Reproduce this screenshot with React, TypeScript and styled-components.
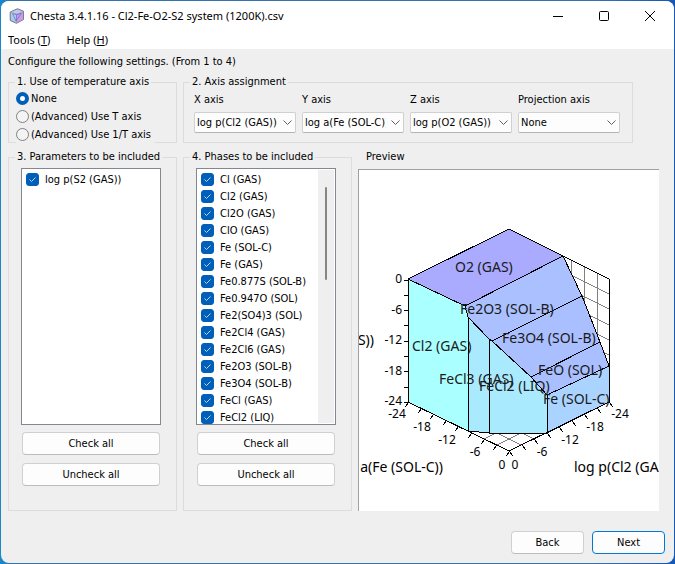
import React, { useState } from "react";
import styled, { createGlobalStyle } from "styled-components";

const GlobalStyle = createGlobalStyle`
  * { box-sizing: border-box; }
  body {
    margin: 0;
    background: linear-gradient(90deg, #1689cc, #3374ae 12px, #3374ae 88%, #1458b8);
    font-family: "DejaVu Sans Condensed", "DejaVu Sans", sans-serif;
    font-size: 11px;
    line-height: 14px;
    color: #000;
  }
`;

const Window = styled.div`
  display: flex;
  flex-direction: column;
  min-height: calc(100vh - 2px);
  margin: 1px;
  border-radius: 8px;
  overflow: hidden;
  background: #efefef;
`;

const TitleBar = styled.header`
  display: flex;
  align-items: center;
  height: 30px;
  padding-left: 8px;
  background: #fff;
  font-family: "Noto Sans", sans-serif;
`;

const Title = styled.h1`
  flex: 1;
  margin: 0 0 0 5px;
  font-size: 11px;
  font-weight: 400;
`;

const Caption = styled.button`
  display: flex;
  align-items: center;
  justify-content: center;
  width: 46px;
  height: 30px;
  padding: 0;
  border: 0;
  background: none;

  &:last-child { margin-right: 1px; }
`;

const MenuBar = styled.nav`
  display: flex;
  gap: 16px;
  height: 18px;
  padding: 0 7px;
  background: #fff;
`;

const MenuItem = styled.button`
  padding: 0;
  border: 0;
  background: none;
  color: #000;
  font: 11px/18px "Noto Sans", sans-serif;
`;

const Main = styled.main`
  flex: 1;
  display: flex;
  flex-direction: column;
  padding: 6px 9px 9px 7px;
`;

const Intro = styled.p`
  margin: 0 0 6px;
`;

const Row = styled.div<{ $grow?: boolean }>`
  display: flex;
  gap: 6px;
  flex: ${(p) => (p.$grow ? 1 : "none")};
  margin-top: ${(p) => (p.$grow ? 7 : 0)}px;
`;

const Group = styled.fieldset<{ $width: number }>`
  flex: 0 1 ${(p) => p.$width}px;
  min-width: 0;
  margin: 0;
  padding: 0 12px;
  border: 1px solid #dcdcdc;
`;

const Legend = styled.legend`
  margin-left: -6px;
  padding: 0 2px;
  white-space: nowrap;
`;

const Radios = styled.div`
  display: flex;
  flex-direction: column;
  gap: 1px;
  width: 138px;
  height: 53px;
  margin: 1px 0 -1px -5px;
  background: #efefef;
`;

const RadioLabel = styled.label`
  display: flex;
  flex: none;
  align-items: center;
  gap: 2px;
  height: 17px;
`;

const Radio = styled.input`
  appearance: none;
  width: 13px;
  height: 13px;
  margin: 0;
  border: 1px solid #808080;
  border-radius: 50%;
  background: #f4f4f4;

  &:checked {
    border: 4px solid #005fb8;
    background: #fff;
  }
`;

const Axes = styled.div`
  display: grid;
  grid-template-columns: repeat(4, minmax(0, 102px));
  gap: 6px;
  margin: 4px 0 8px -2px;
`;

const AxisLabel = styled.label`
  display: flex;
  flex-direction: column;
  gap: 5px;
`;

const SelectBox = styled.span`
  position: relative;
  display: block;
`;

const Select = styled.select`
  appearance: none;
  display: block;
  width: 100%;
  height: 21px;
  padding: 0 17px 0 2px;
  border: 1px solid #d0d0d0;
  border-bottom-color: #b4b4b4;
  border-radius: 2px;
  background: #fdfdfd;
  color: #000;
  font: inherit;
`;

const Chevron = styled.svg`
  position: absolute;
  right: 4px;
  top: 8px;
  pointer-events: none;
`;

const List = styled.div`
  display: flex;
  height: 257px;
  margin-top: 4px;
  border: 1px solid #828790;
  background: #fff;
  overflow: hidden;
`;

const Items = styled.ul`
  flex: 1;
  min-width: 0;
  margin: 0;
  padding: 2px 0 0 4px;
  list-style: none;
`;

const ItemLabel = styled.label`
  display: flex;
  align-items: center;
  gap: 6px;
  height: 17px;
  white-space: nowrap;
`;

const CheckWrap = styled.span`
  position: relative;
  width: 13px;
  height: 13px;
`;

const Check = styled.input`
  appearance: none;
  display: block;
  width: 13px;
  height: 13px;
  margin: 0;
  border: 1px solid #808080;
  border-radius: 3px;
  background: #fff;

  &:checked {
    border-color: #005fb8;
    background: #005fb8;
  }
`;

const Tick = styled.svg`
  position: absolute;
  inset: 0;
  pointer-events: none;
`;

const Track = styled.div`
  display: flex;
  justify-content: center;
  width: 16px;
  margin: 1px;
  padding-top: 17px;
  background: #efefef;
`;

const Thumb = styled.div`
  width: 2px;
  height: 93px;
  border-radius: 1px;
  background: #868686;
`;

const Actions = styled.div`
  display: flex;
  flex-direction: column;
  gap: 8px;
  padding: 7px 1px 0;
`;

const Button = styled.button<{ $primary?: boolean }>`
  height: 23px;
  padding: 0 8px;
  border: 1px solid ${(p) => (p.$primary ? "#0078d4" : "#d0d0d0")};
  border-bottom-color: ${(p) => (p.$primary ? "#0078d4" : "#bcbcbc")};
  border-radius: 4px;
  background: #fdfdfd;
  color: #000;
  font: inherit;
`;

const ListGroup = styled(Group)`
  height: 361px;
  padding-right: 15px;
`;

const Preview = styled.section`
  flex: 1;
  min-width: 0;
  display: flex;
  flex-direction: column;
  margin-right: 6px;
`;

const PreviewTitle = styled.h2`
  margin: 0 0 5px 8px;
  font-size: 11px;
  font-weight: 400;
`;

const Canvas = styled.div`
  height: 342px;
  border-top: 1px solid #a0a0a0;
  border-left: 1px solid #a0a0a0;
  background: #fff;
`;

const Chart = styled.svg`
  display: block;
  width: 100%;
  height: 100%;
  font-family: "Noto Sans", sans-serif;
`;

const Footer = styled.footer`
  display: flex;
  justify-content: flex-end;
  gap: 8px;
  margin-top: 20px;

  ${Button} { width: 73px; }
`;

const axes = [
  { label: "X axis", value: "log p(Cl2 (GAS))" },
  { label: "Y axis", value: "log a(Fe (SOL-C))" },
  { label: "Z axis", value: "log p(O2 (GAS))" },
  { label: "Projection axis", value: "None" },
];

const phases = [
  "Cl (GAS)", "Cl2 (GAS)", "Cl2O (GAS)", "ClO (GAS)", "Fe (SOL-C)",
  "Fe (GAS)", "Fe0.877S (SOL-B)", "Fe0.947O (SOL)", "Fe2(SO4)3 (SOL)",
  "Fe2Cl4 (GAS)", "Fe2Cl6 (GAS)", "Fe2O3 (SOL-B)", "Fe3O4 (SOL-B)",
  "FeCl (GAS)", "FeCl2 (LIQ)",
];

const regions = [
  { fill: "#aaaaff", points: "509,229 563,256 465,306 408,279" },
  { fill: "#aaffff", points: "408,279 465,306 468,317 468,431 408,402" },
  { fill: "#aaeaff", points: "468,317 489,339 489,433 468,431" },
  { fill: "#aaeaff", points: "489,339 492,341 531,377 547,395 547,433 489,433" },
  { fill: "#aac0ff", points: "465,306 563,256 582,296 492,341 489,339 468,317" },
  { fill: "#aabfff", points: "492,341 582,296 600,342 531,377" },
  { fill: "#aabfff", points: "531,377 600,342 609,366 547,395" },
  { fill: "#aad4ff", points: "547,395 609,366 609,402 547,433" },
];

const regionLabels: [string, number, number][] = [
  ["O2 (GAS)", 455, 272],
  ["Fe2O3 (SOL-B)", 460, 314],
  ["Fe3O4 (SOL-B)", 502, 343],
  ["Cl2 (GAS)", 412, 351],
  ["FeCl3 (GAS)", 439, 384],
  ["FeCl2 (LIQ)", 479, 391],
  ["FeO (SOL)", 538, 375],
  ["Fe (SOL-C)", 543, 404],
];

const bottomLabels: [string, number, number][] = [
  ["-24", 397, 418], ["-18", 422, 431], ["-12", 447, 444], ["-6", 475, 456], ["0", 502, 469],
  ["0", 515, 469], ["-6", 542, 456], ["-12", 570, 444], ["-18", 595, 431], ["-24", 620, 418],
];

const steps = [0, 1, 2, 3, 4, 5, 6, 7, 8];

function PhaseDiagram() {
  return (
    <Chart viewBox="359 170 300 341" role="img" aria-label="Phase diagram preview">
      <g stroke="#808080" fill="none" shapeRendering="crispEdges">
        <path d="M571.5 260V330M584.5 266V330M597.5 273V350" />
        <path d="M559 269L609 294M559 284L609 309M559 300L609 325M559 315L609 340M575 338L609 355" />
        <path d="M484 439L500 431M497 445L525 431M534 439L518 431M521 445L493 431" />
      </g>
      <g stroke="#000" strokeLinejoin="round" shapeRendering="crispEdges">
        {regions.map((r) => (
          <polygon key={r.points} points={r.points} fill={r.fill} />
        ))}
        <path fill="none" d="M563 256L609 279V402L509 451L408 402V279" />
        {steps.map((i) => {
          const y = Math.round(279.5 + i * 15.3);
          const lx = Math.round(408 + i * 12.6);
          const rx = Math.round(509 + i * 12.5);
          const ly = Math.round(402 + i * 6.1);
          const ry = Math.round(451 - i * 6.1);
          return (
            <path
              key={i}
              fill="none"
              d={`M404 ${y}H409M${lx + 1} ${ly}l-4 5M${rx} ${ry}l4 5`}
            />
          );
        })}
      </g>
      <g fontSize="12">
        {[0, 1, 2, 3, 4].map((i) => (
          <text key={i} x="402" y={Math.round(283 + i * 30.5)} textAnchor="end">
            {i === 0 ? "0" : `-${i * 6}`}
          </text>
        ))}
        {bottomLabels.map(([t, x, y]) => (
          <text key={x} x={x} y={y} textAnchor="middle">{t}</text>
        ))}
      </g>
      <g fontSize="14">
        {regionLabels.map(([t, x, y]) => (
          <text key={t} x={x} y={y} fill="#1a1a1a">{t}</text>
        ))}
        <text x="374" y="345" textAnchor="end">log p(O2 (GAS))</text>
        <text x="443" y="472" textAnchor="end">log a(Fe (SOL-C))</text>
        <text x="574" y="472">log p(Cl2 (GAS))</text>
      </g>
    </Chart>
  );
}

function CheckItem({ text, checked, onToggle }: { text: string; checked: boolean; onToggle: () => void }) {
  return (
    <li>
      <ItemLabel>
        <CheckWrap>
          <Check type="checkbox" checked={checked} onChange={onToggle} />
          {checked && (
            <Tick width="13" height="13" viewBox="0 0 13 13" fill="none" stroke="#b8d8f5">
              <path d="M3.5 6.5L5.5 8.5L9.5 4.5" />
            </Tick>
          )}
        </CheckWrap>
        {text}
      </ItemLabel>
    </li>
  );
}

function CheckGroup({ title, items, scroll }: { title: string; items: string[]; scroll?: boolean }) {
  const [off, setOff] = useState<string[]>([]);
  const toggle = (t: string) => setOff(off.includes(t) ? off.filter((o) => o !== t) : [...off, t]);
  return (
    <ListGroup $width={169}>
      <Legend>{title}</Legend>
      <List>
        <Items>
          {items.map((t) => (
            <CheckItem key={t} text={t} checked={!off.includes(t)} onToggle={() => toggle(t)} />
          ))}
        </Items>
        {scroll && <Track><Thumb /></Track>}
      </List>
      <Actions>
        <Button type="button" onClick={() => setOff([])}>Check all</Button>
        <Button type="button" onClick={() => setOff(items)}>Uncheck all</Button>
      </Actions>
    </ListGroup>
  );
}

function Logo() {
  return (
    <svg width="16" height="16" viewBox="0 0 16 16" strokeLinejoin="round">
      <path d="M8.5 .7L14.5 3.2V11.5L7.5 15.3L1.2 12.5V4Z" fill="#8fa3b8" stroke="#77808c" />
      <path d="M2 4.6L7.6 6.5L7.3 14.4L2 12Z" fill="#a6cdf0" />
      <path d="M7.8 6.5L14 3.8V11.2L7.5 14.6Z" fill="#c99cf0" />
      <path d="M2.3 4.1L8.5 1.6L13.6 3.4L7.7 5.8Z" fill="#c4c8ee" />
      <path d="M3.5 5.5L7 13L12.5 5.2M3.5 5.5L7.7 6.8L12.5 5.2M7.7 6.8L7.2 13.5" fill="none" stroke="#6d6bb5" strokeWidth=".7" />
    </svg>
  );
}

export default function App() {
  const [mode, setMode] = useState(0);
  return (
    <>
      <GlobalStyle />
      <Window>
        <TitleBar>
          <Logo />
          <Title>Chesta 3.4.1.16 - Cl2-Fe-O2-S2 system (1200K).csv</Title>
          <Caption aria-label="Minimize">
            <svg width="10" height="10" stroke="#000" fill="none"><path d="M0 5.5H10" /></svg>
          </Caption>
          <Caption aria-label="Maximize">
            <svg width="10" height="10" stroke="#000" fill="none"><rect x=".5" y=".5" width="9" height="9" rx="1" /></svg>
          </Caption>
          <Caption aria-label="Close">
            <svg width="10" height="10" stroke="#000" fill="none"><path d="M0 0L10 10M10 0L0 10" /></svg>
          </Caption>
        </TitleBar>
        <MenuBar>
          <MenuItem>Tools (<u>T</u>)</MenuItem>
          <MenuItem>Help (<u>H</u>)</MenuItem>
        </MenuBar>
        <Main>
          <Intro>Configure the following settings. (From 1 to 4)</Intro>
          <Row>
            <Group $width={169}>
              <Legend>1. Use of temperature axis</Legend>
              <Radios>
                {["None", "(Advanced) Use T axis", "(Advanced) Use 1/T axis"].map((t, i) => (
                  <RadioLabel key={t}>
                    <Radio type="radio" name="temperature" checked={mode === i} onChange={() => setMode(i)} />
                    {t}
                  </RadioLabel>
                ))}
              </Radios>
            </Group>
            <Group $width={450}>
              <Legend>2. Axis assignment</Legend>
              <Axes>
                {axes.map((a) => (
                  <AxisLabel key={a.label}>
                    {a.label}
                    <SelectBox>
                      <Select defaultValue={a.value}>
                        <option>{a.value}</option>
                      </Select>
                      <Chevron width="9" height="6" fill="none" stroke="#606060">
                        <path d="M.5 .5L4.5 4.5L8.5 .5" />
                      </Chevron>
                    </SelectBox>
                  </AxisLabel>
                ))}
              </Axes>
            </Group>
          </Row>
          <Row $grow>
            <CheckGroup title="3. Parameters to be included" items={["log p(S2 (GAS))"]} />
            <CheckGroup title="4. Phases to be included" items={phases} scroll />
            <Preview>
              <PreviewTitle>Preview</PreviewTitle>
              <Canvas><PhaseDiagram /></Canvas>
            </Preview>
          </Row>
          <Footer>
            <Button type="button">Back</Button>
            <Button type="button" $primary>Next</Button>
          </Footer>
        </Main>
      </Window>
    </>
  );
}
